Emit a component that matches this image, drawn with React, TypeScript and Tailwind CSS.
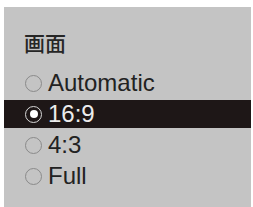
import React from 'react';

const OPTIONS = ['Automatic', '16:9', '4:3', 'Full'];

function Radio({ checked }: { checked: boolean }) {
  if (checked) {
    return (
      <span className="flex h-[17px] w-[17px] shrink-0 items-center justify-center rounded-full border-[1.5px] border-[#d8d8d8]">
        <span className="h-[8px] w-[8px] rounded-full bg-white" />
      </span>
    );
  }
  return <span className="h-[17px] w-[17px] shrink-0 rounded-full border-[1.5px] border-[#8a8a8a]" />;
}

export default function App() {
  const selected = '16:9';

  return (
    <div className="h-[207px] w-[253px] overflow-hidden bg-white pl-1 pr-[2px] pt-[7px]">
      <div className="h-[200px] bg-[#c4c4c4] pt-[24px]">
        <p className="pl-[20px] text-[21px] font-medium leading-[23px] text-[#262626] [font-family:'Noto_Sans_CJK_JP',sans-serif]">
          画面
        </p>
        <ul className="mt-[15px] flex flex-col gap-[3px] [font-family:'Liberation_Sans',Arial,sans-serif]">
          {OPTIONS.map((opt) => {
            const on = opt === selected;
            return (
              <li
                key={opt}
                className={
                  on
                    ? 'flex h-[28px] items-center gap-[6px] bg-[#1e1717] pl-[21px] text-[24px] text-[#ececec]'
                    : 'flex h-[28px] items-center gap-[6px] pl-[21px] text-[24px] text-[#222]'
                }
              >
                <Radio checked={on} />
                <span className="leading-none">{opt}</span>
              </li>
            );
          })}
        </ul>
      </div>
    </div>
  );
}
